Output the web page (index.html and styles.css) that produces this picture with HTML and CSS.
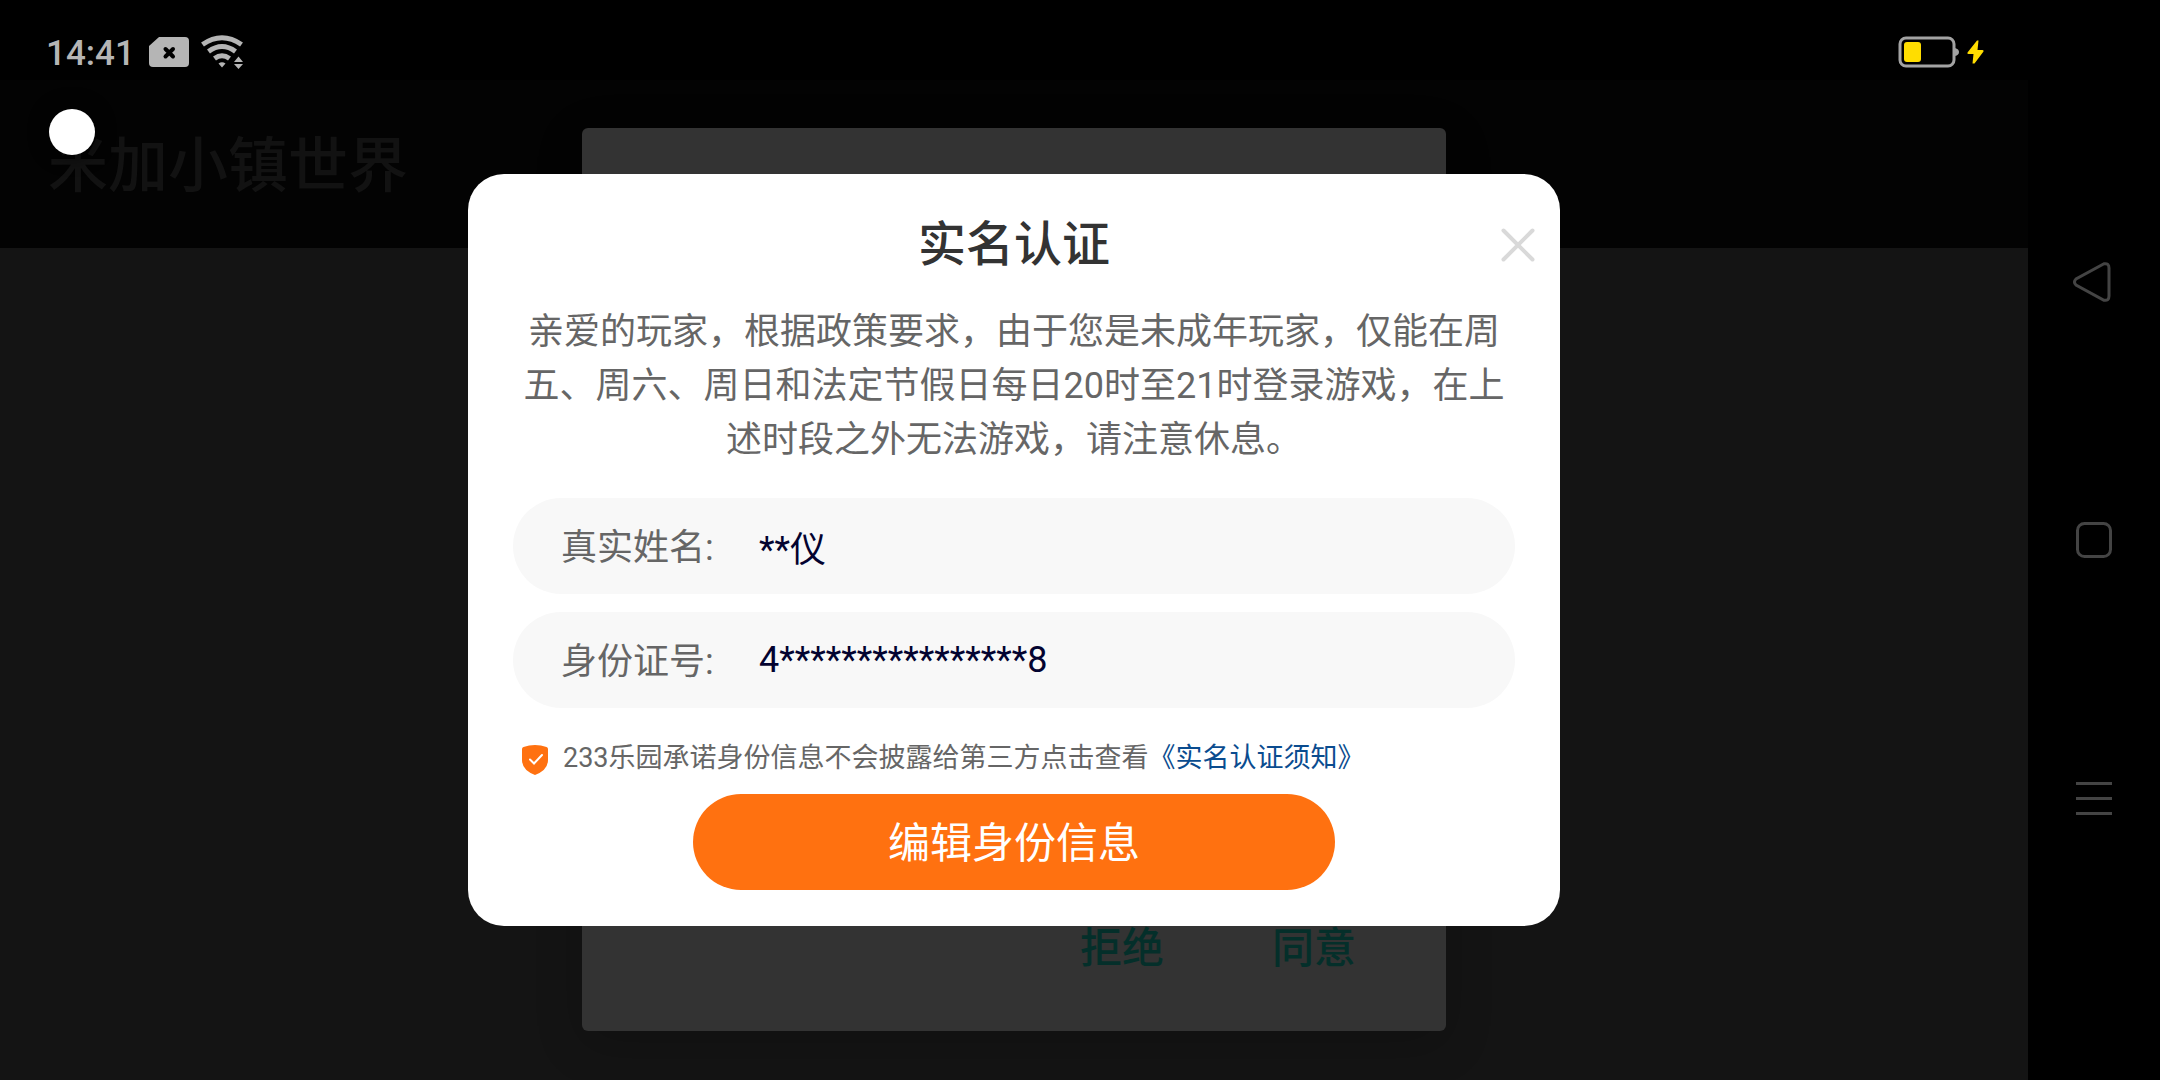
FILE: index.html
```html
<!DOCTYPE html>
<html lang="zh-CN">
<head>
  <meta charset="UTF-8" />
  <title>实名认证</title>
  <meta name="viewport" content="width=device-width, initial-scale=1.0" />
  <link rel="stylesheet" href="styles.css">
</head>
<body>

  <div class="screen">
    <!-- 状态栏 -->
    <div class="status-bar">
      <span class="clock">14:41</span>
      <svg class="sim-icon" width="40" height="30" viewBox="0 0 40 30">
        <path d="M10 0H36Q40 0 40 4V26Q40 30 36 30H4Q0 30 0 26V9Z" fill="#b5b5b5"/>
        <path d="M16.500 12L24 19.500M24 12L16.500 19.500" stroke="#000" stroke-width="4" stroke-linecap="round"/>
      </svg>
      <svg class="wifi-icon" width="42" height="34" viewBox="0 0 42 34">
        <g fill="none" stroke="#b5b5b5" stroke-width="5">
          <path d="M1.500 9.500Q21 -4 40.500 9.500"/>
          <path d="M7.500 16.500Q21 6.500 34.500 16.500"/>
          <path d="M13.500 23.500Q21 18 28.500 23.500"/>
        </g>
        <path d="M17.500 28.500Q21 26 24.500 28.500L21 32.500Z" fill="#b5b5b5"/>
        <path d="M33 27L37.500 21.500L42 27ZM33 29L37.500 34L42 29Z" fill="#b5b5b5"/>
      </svg>
      <div class="battery">
        <svg width="61" height="32" viewBox="0 0 61 32">
          <rect x="2" y="2" width="54" height="28" rx="6" fill="none" stroke="#a3a3a3" stroke-width="3"/>
          <path d="M57 12Q61 13 61 16T57 20Z" fill="#a3a3a3"/>
          <rect x="6" y="6" width="17" height="20" rx="3" fill="#ffdd00"/>
        </svg>
        <svg width="17" height="24" viewBox="0 0 17 24">
          <path d="M10 0.500L0.500 12.500Q0 14 1.500 14H6.500L5.500 23.500H7.500L16.500 11.500Q17 10 15.500 10H10.500L11.500 0.500Z" fill="#ffdd00"/>
        </svg>
      </div>
    </div>

    <!-- 应用标题 -->
    <header class="app-bar">
      <h1>米加小镇世界</h1>
    </header>
    <div class="touch-dot"></div>

    <!-- 下层隐私弹窗 -->
    <div class="back-layer">
      <div class="privacy-dialog">
        <button class="privacy-btn" type="button">拒绝</button>
        <button class="privacy-btn" type="button">同意</button>
      </div>
    </div>

    <!-- 实名认证弹窗 -->
    <div class="front-layer">
      <form class="modal">
        <h2>实名认证</h2>
        <button class="close-btn" type="button" aria-label="关闭">
          <svg width="36" height="36" viewBox="0 0 36 36">
            <path d="M3.500 3.500L32.500 32.500M32.500 3.500L3.500 32.500" stroke="#d9d9d9" stroke-width="4" stroke-linecap="round"/>
          </svg>
        </button>
        <p class="notice">亲爱的玩家，根据政策要求，由于您是未成年玩家，仅能在周五、周六、周日和法定节假日每日20时至21时登录游戏，在上述时段之外无法游戏，请注意休息。</p>

        <div class="field">
          <label for="realName">真实姓名:</label>
          <input id="realName" type="text" value="**仪" readonly>
        </div>
        <div class="field">
          <label for="idNumber">身份证号:</label>
          <input id="idNumber" type="text" value="4****************8" readonly>
        </div>

        <div class="promise">
          <svg width="26" height="30" viewBox="0 0 26 30">
            <path d="M13 0Q19 0 24.500 2Q26 2.500 26 4V15Q26 25 13 30Q0 25 0 15V4Q0 2.500 1.500 2Q7 0 13 0Z" fill="#ff7110"/>
            <path d="M8 14.500L12 18.500L20 10" fill="none" stroke="#fff" stroke-width="2" stroke-linecap="round"/>
          </svg>
          <span>233乐园承诺身份信息不会披露给第三方点击查看<a href="#">《实名认证须知》</a></span>
        </div>

        <button class="edit-btn" type="button">编辑身份信息</button>
      </form>
    </div>
  </div>

  <!-- 右侧导航键 -->
  <nav class="nav-bar">
    <button type="button" aria-label="返回">
      <svg width="40" height="40" viewBox="0 0 40 40">
        <path d="M30 1.800L2 17Q-1 20 2 23L30 38.200Q35 39 35 34V6Q35 1 30 1.800Z"/>
      </svg>
    </button>
    <button type="button" aria-label="主页">
      <svg width="40" height="40" viewBox="0 0 40 40">
        <rect x="3.500" y="3.500" width="33" height="33" rx="7"/>
      </svg>
    </button>
    <button type="button" aria-label="菜单">
      <svg width="40" height="40" viewBox="0 0 40 40">
        <path d="M2 5.500H38M2 20.500H38M2 35.500H38"/>
      </svg>
    </button>
  </nav>

</body>
</html>
```
FILE: styles.css
```css
* {
  box-sizing: border-box;
}

body {
  margin: 0;
  display: flex;
  min-height: 100vh;
  background: #000;
  font-family: Roboto, 'Noto Sans CJK SC', sans-serif;
}

button {
  border: none;
  padding: 0;
  background: none;
  font-family: inherit;
  cursor: pointer;
}

svg {
  display: block;
  overflow: visible;
}

.screen {
  position: relative;
  flex: 1;
  background: #141414;
}

.status-bar {
  display: flex;
  align-items: center;
  height: 80px;
  padding: 24px 44px 0 46px;
  background: #000;
}

.clock {
  padding-top: 4px;
  color: #b5b5b5;
  font-size: 35px;
  font-weight: 500;
  line-height: 52px;
}

.sim-icon {
  margin-left: 14px;
}

.wifi-icon {
  margin-left: 12px;
}

.battery {
  display: flex;
  align-items: center;
  gap: 8px;
  margin-left: auto;
}

.app-bar {
  display: flex;
  align-items: center;
  height: 168px;
  padding: 0 48px 8px;
  background: #030303;
}

.app-bar h1 {
  margin: 0;
  color: #121212;
  font-size: 60px;
  font-weight: 500;
}

.touch-dot {
  position: absolute;
  top: 109px;
  left: 49px;
  width: 46px;
  height: 46px;
  border-radius: 50%;
  background: #fff;
  box-shadow: 0 0 16px 4px rgba(0, 0, 0, 0.5);
}

/* 弹窗层 */
.back-layer,
.front-layer {
  position: absolute;
  top: 0;
  right: 0;
  bottom: 0;
  left: 0;
  display: flex;
  justify-content: center;
}

.back-layer {
  padding: 128px 0 49px;
}

.privacy-dialog {
  display: flex;
  justify-content: flex-end;
  align-items: flex-end;
  gap: 108px;
  width: 80%;
  max-width: 864px;
  padding: 0 90px 52px;
  border-radius: 6px;
  background: #333;
  box-shadow: 0 12px 48px rgba(0, 0, 0, 0.2);
}

.privacy-btn {
  color: #042f2a;
  font-size: 42px;
  font-weight: 500;
  line-height: 60px;
}

.front-layer {
  align-items: center;
  padding-top: 20px;
}

.modal {
  position: relative;
  width: 90%;
  max-width: 1092px;
  padding: 35px 45px 36px;
  border-radius: 36px;
  background: #fff;
}

.modal h2 {
  margin: 0 0 24px;
  color: #333;
  font-size: 48px;
  font-weight: 500;
  line-height: 72px;
  text-align: center;
}

.close-btn {
  position: absolute;
  top: 53px;
  right: 24px;
}

.notice {
  margin: 0 0 31px;
  color: #666;
  font-size: 36px;
  line-height: 54px;
  text-align: center;
}

.field {
  display: flex;
  align-items: center;
  height: 96px;
  margin-bottom: 18px;
  padding: 0 48px;
  border-radius: 48px;
  background: #f8f8f8;
  font-size: 36px;
  line-height: 54px;
}

.field label {
  width: 198px;
  padding-top: 4px;
  color: #666;
}

.field input {
  flex: 1;
  min-width: 0;
  height: 54px;
  padding: 0;
  border: none;
  outline: none;
  background: none;
  color: #030330;
  font-family: inherit;
  font-size: 36px;
}

.promise {
  display: flex;
  align-items: center;
  gap: 15px;
  margin: 30px 0 16px;
  padding-left: 9px;
  color: #666;
  font-size: 27px;
  line-height: 40px;
}

.promise svg {
  margin-top: 4px;
}

.promise a {
  color: #0a4c8f;
  text-decoration: none;
}

.edit-btn {
  display: block;
  width: 642px;
  max-width: 100%;
  height: 96px;
  margin: 0 auto;
  padding-bottom: 6px;
  border-radius: 48px;
  background: #ff7110;
  color: #fff;
  font-size: 42px;
}

.nav-bar {
  display: flex;
  flex-direction: column;
  justify-content: center;
  align-items: center;
  gap: 218px;
  width: 132px;
}

.nav-bar svg {
  fill: none;
  stroke: #444;
  stroke-width: 3;
}
```
